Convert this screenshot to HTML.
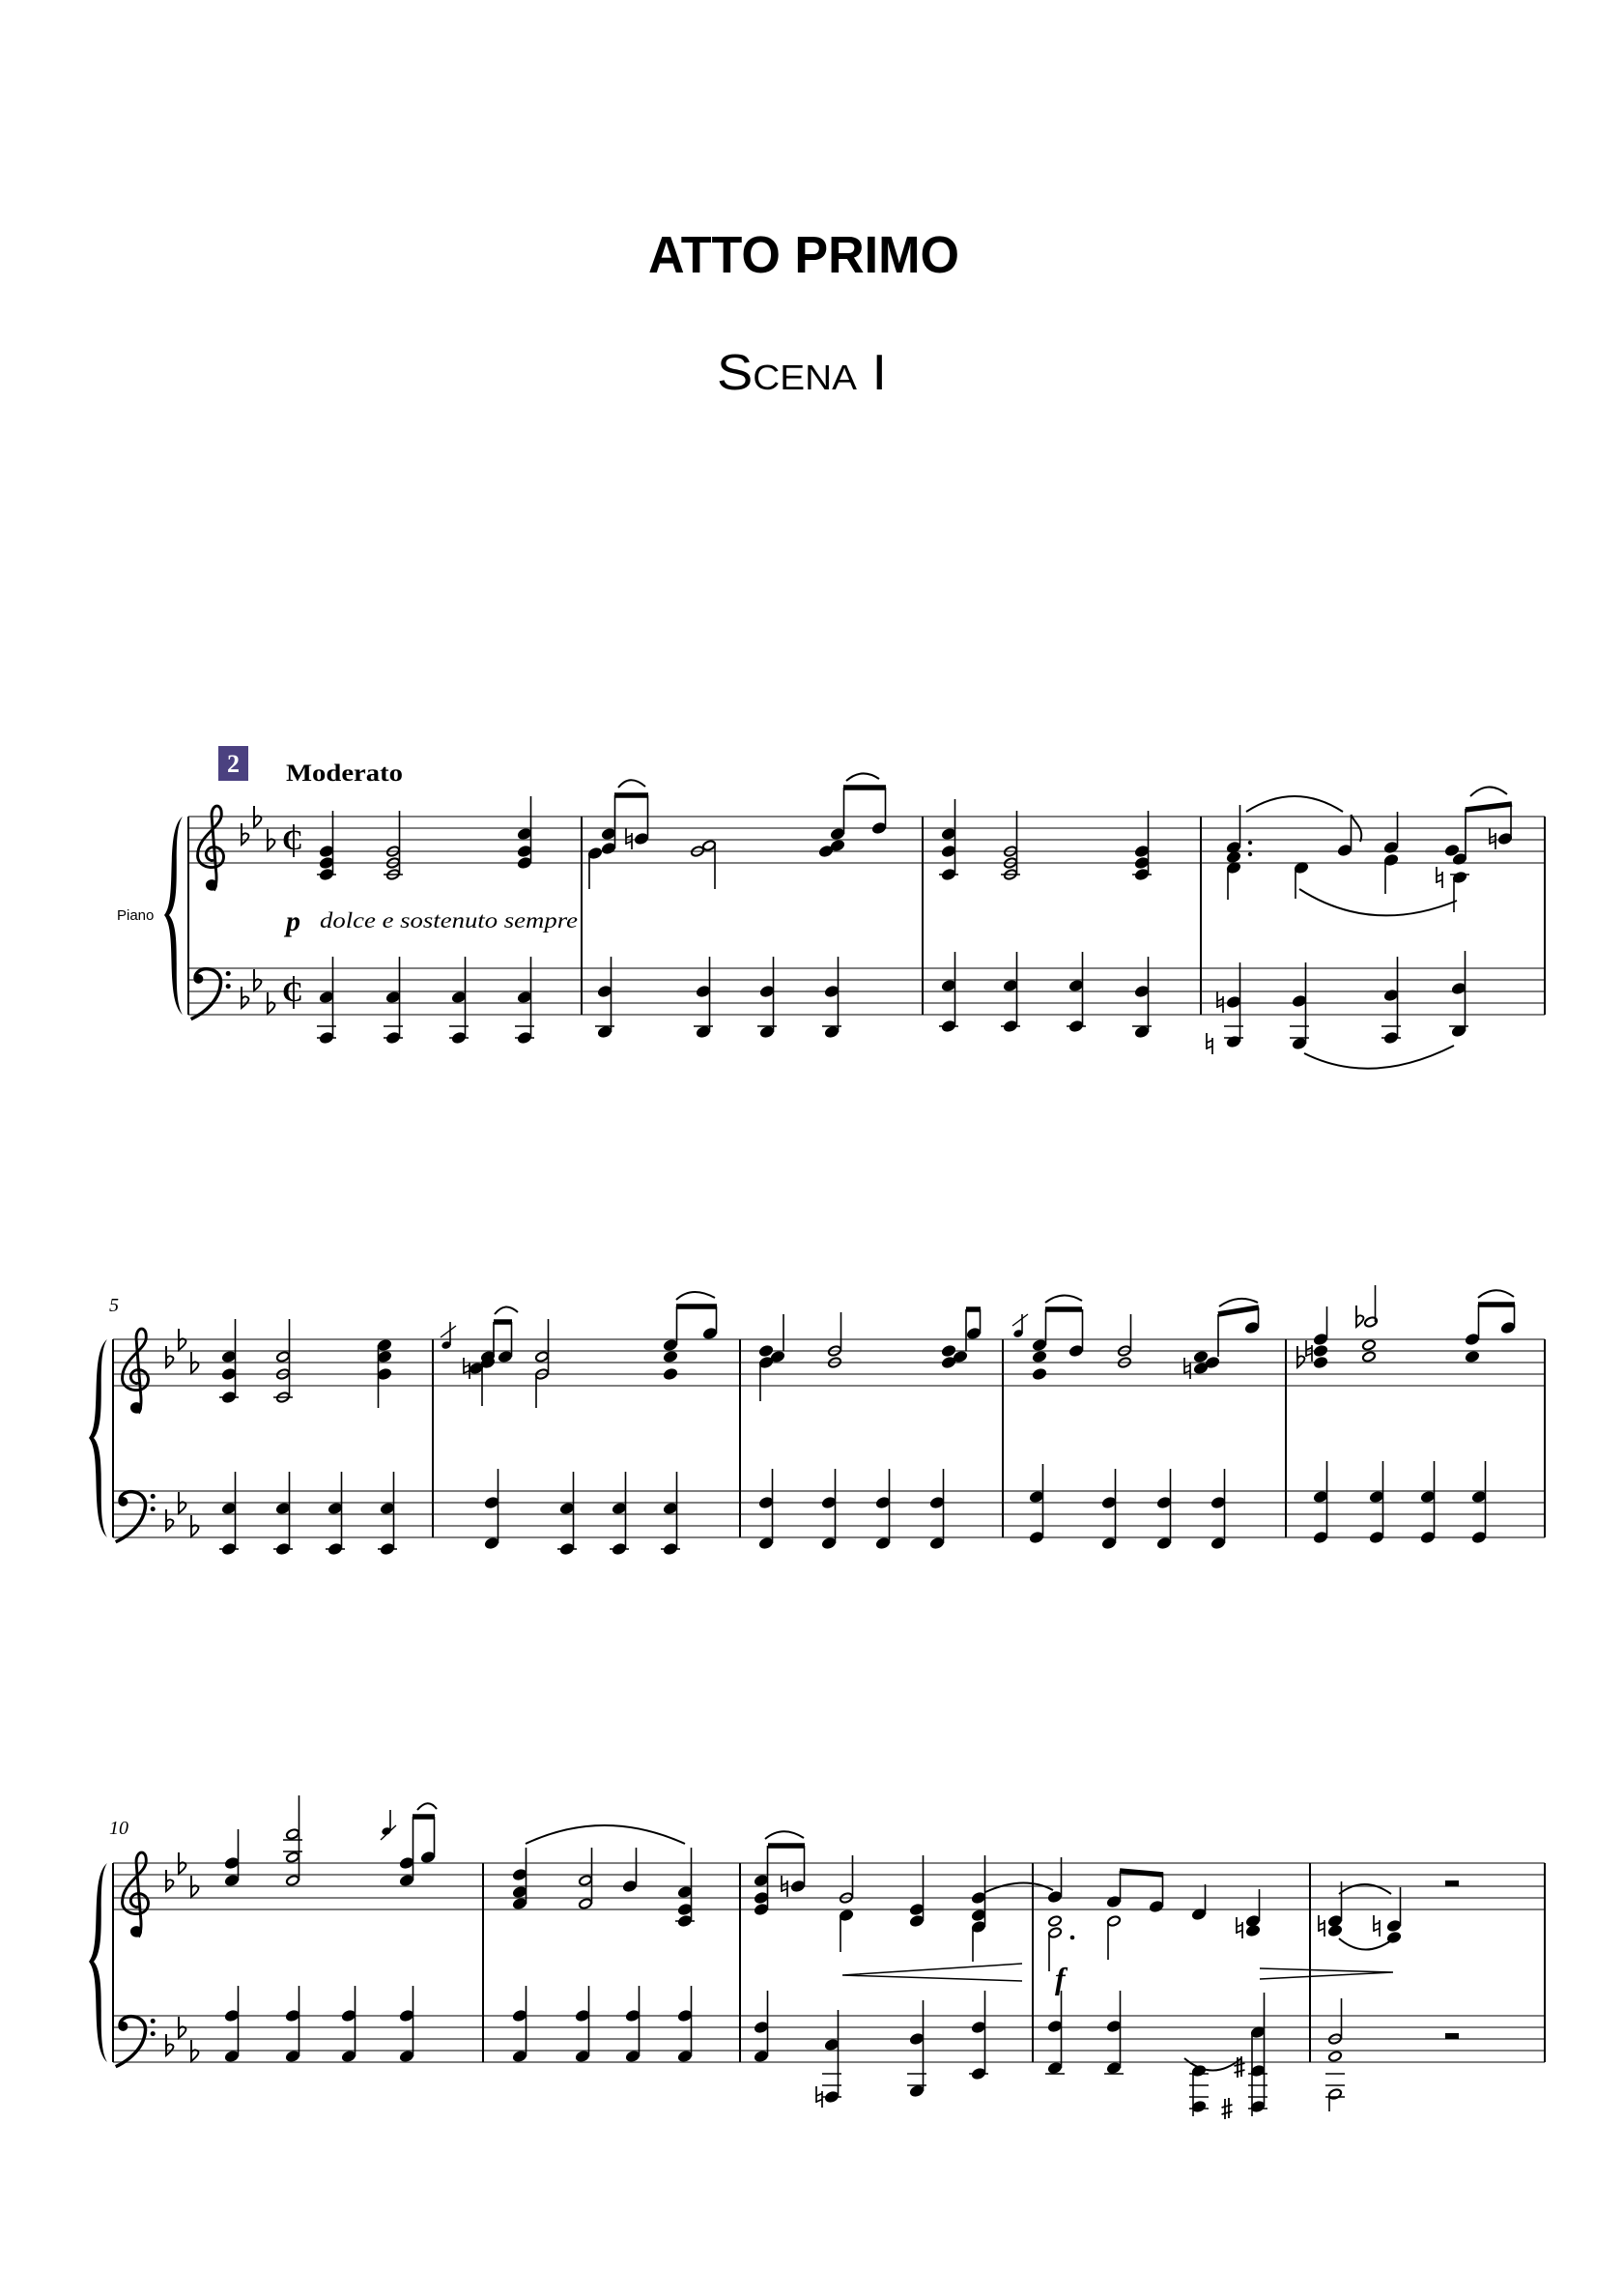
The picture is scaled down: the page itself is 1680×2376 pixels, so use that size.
<!DOCTYPE html>
<html><head><meta charset="utf-8"><style>
html,body{margin:0;padding:0;background:#fff;}
svg{display:block;}
</style></head><body>
<svg width="1680" height="2376" viewBox="0 0 1680 2376" xmlns="http://www.w3.org/2000/svg">
<defs>
<ellipse id="q" rx="7.3" ry="5.3" transform="rotate(-22)" fill="#000"/>
<ellipse id="h" rx="6.3" ry="4.2" transform="rotate(-22)" fill="none" stroke="#000" stroke-width="2.2"/>
<ellipse id="g" rx="4.8" ry="3.6" transform="rotate(-22)" fill="#000"/>
<path id="fl" d="M0 -17 V5 C5 1 10 -4 6 -6 C3 -8 0 -5 0 -3" fill="none" stroke="#000" stroke-width="1.9"/>
<path id="na" d="M-3 -11 V6 M3 -6 V11 M-3 -1 L3 -3.5 M-3 5 L3 2.5" fill="none" stroke="#000" stroke-width="1.7"/>
<path id="sh" d="M-2 -11 V10 M2 -12 V9 M-5.5 -2 L5.5 -5 M-5.5 5 L5.5 2" fill="none" stroke="#000" stroke-width="1.8"/>
<g id="tc" fill="none" stroke="#000" transform="scale(1.12)">
<path d="M3 36 C-5 38 -8 27 1 26 C7 26 8 34 3 36 Z" fill="#000" stroke="none"/>
<path d="M3 36 C5 34 6 26 5 18 L1 -32 C0 -44 11 -46 10 -33 C9 -22 -12 -14 -12 4 C-12 17 11 19 12 6 C13 -4 -1 -8 -4 1 C-5 6 0 10 3 8" stroke-width="2.6"/>
</g>
<g id="bc" transform="scale(1.1)">
<path d="M-9 -1 C-10 -14 16 -14 15 3 C14 19 0 31 -13 37" fill="none" stroke="#000" stroke-width="3.2"/>
<circle cx="-6" cy="-1" r="4.5" fill="#000"/>
<circle cx="22" cy="-6" r="2.3" fill="#000"/>
<circle cx="22" cy="6" r="2.3" fill="#000"/>
</g>
<g id="ct">
<text x="0" y="10" font-family="Liberation Serif, serif" font-weight="bold" font-size="30" text-anchor="middle">C</text>
<line x1="1" y1="-16" x2="1" y2="18" stroke="#000" stroke-width="1.8"/>
</g>
</defs>

<text x="832" y="282" text-anchor="middle" font-family="Liberation Sans, sans-serif" font-weight="bold" font-size="54" textLength="322" lengthAdjust="spacingAndGlyphs">ATTO PRIMO</text>
<text x="830" y="403" text-anchor="middle" font-family="Liberation Sans, sans-serif" font-size="52" font-variant="small-caps" textLength="176" lengthAdjust="spacingAndGlyphs">Scena I</text>

<rect x="226" y="772" width="31" height="36" fill="#4b4180"/>
<text x="241.5" y="799" text-anchor="middle" font-family="Liberation Serif, serif" font-weight="bold" font-size="26" fill="#fff">2</text>
<text x="296" y="808" font-family="Liberation Serif, serif" font-weight="bold" font-size="25" textLength="121" lengthAdjust="spacingAndGlyphs">Moderato</text>
<text x="121" y="952" font-family="Liberation Sans, sans-serif" font-size="15">Piano</text>
<text x="296" y="963" font-family="Liberation Serif, serif" font-weight="bold" font-style="italic" font-size="30">p</text>
<text x="331" y="960" font-family="Liberation Serif, serif" font-style="italic" font-size="23" textLength="267" lengthAdjust="spacingAndGlyphs">dolce e sostenuto sempre</text>
<text x="113" y="1357" font-family="Liberation Serif, serif" font-style="italic" font-size="20">5</text>
<text x="113" y="1898" font-family="Liberation Serif, serif" font-style="italic" font-size="20">10</text>
<text x="1092" y="2058" font-family="Liberation Serif, serif" font-weight="bold" font-style="italic" font-size="32">f</text>

<g stroke="#555" stroke-width="1.4">
<path d="M195 845H1599M195 857H1599M195 869H1599M195 881H1599M195 893H1599M195 1002H1599M195 1014H1599M195 1026H1599M195 1038H1599M195 1050H1599"/>
<path d="M117 1386H1599M117 1398H1599M117 1410H1599M117 1422H1599M117 1434H1599M117 1543H1599M117 1555H1599M117 1567H1599M117 1579H1599M117 1591H1599"/>
<path d="M117 1928H1599M117 1940H1599M117 1952H1599M117 1964H1599M117 1976H1599M117 2086H1599M117 2098H1599M117 2110H1599M117 2122H1599M117 2134H1599"/>
</g>
<g stroke="#000" stroke-width="2">
<path d="M195 845V1050M602 845V1050M955 845V1050M1243 845V1050M1599 845V1050"/>
<path d="M117 1386V1591M448 1386V1591M766 1386V1591M1038 1386V1591M1331 1386V1591M1599 1386V1591"/>
<path d="M117 1928V2134M500 1928V2134M766 1928V2134M1069 1928V2134M1356 1928V2134M1599 1928V2134"/>
</g>
<g fill="#000">
<path d="M189 845 C170 860 184 930 170 947 C184 964 170 1034 189 1050 C176 1030 190 964 175 947 C190 930 176 864 189 845Z"/>
<path d="M111 1386 C92 1401 106 1471 92 1488 C106 1505 92 1575 111 1591 C98 1571 112 1505 97 1488 C112 1471 98 1405 111 1386Z"/>
<path d="M111 1928 C92 1943 106 2013 92 2030 C106 2047 92 2117 111 2134 C98 2113 112 2047 97 2030 C112 2013 98 1947 111 1928Z"/>
</g>
<use href="#tc" x="218" y="881"/><use href="#bc" x="212" y="1014"/>
<use href="#tc" x="140" y="1422"/><use href="#bc" x="134" y="1555"/>
<use href="#tc" x="140" y="1964"/><use href="#bc" x="134" y="2098"/>
<g>
<use href="#fl" x="250" y="869"/><use href="#fl" x="263" y="851"/><use href="#fl" x="277" y="875"/>
<use href="#fl" x="250" y="1038"/><use href="#fl" x="263" y="1020"/><use href="#fl" x="277" y="1044"/>
<use href="#fl" x="172" y="1410"/><use href="#fl" x="185" y="1392"/><use href="#fl" x="198" y="1416"/>
<use href="#fl" x="172" y="1579"/><use href="#fl" x="185" y="1561"/><use href="#fl" x="198" y="1585"/>
<use href="#fl" x="172" y="1952"/><use href="#fl" x="185" y="1934"/><use href="#fl" x="198" y="1958"/>
<use href="#fl" x="172" y="2122"/><use href="#fl" x="185" y="2104"/><use href="#fl" x="198" y="2128"/>
</g>
<use href="#ct" x="303" y="869"/><use href="#ct" x="303" y="1026"/>

<g>
<use href="#q" x="338" y="881"/><use href="#q" x="338" y="893"/><use href="#q" x="338" y="905"/>
<use href="#h" x="407" y="881"/><use href="#h" x="407" y="893"/><use href="#h" x="407" y="905"/>
<use href="#q" x="543" y="863"/><use href="#q" x="543" y="881"/><use href="#q" x="543" y="893"/>
<use href="#q" x="338" y="1032"/><use href="#q" x="338" y="1074"/>
<use href="#q" x="407" y="1032"/><use href="#q" x="407" y="1074"/>
<use href="#q" x="475" y="1032"/><use href="#q" x="475" y="1074"/>
<use href="#q" x="543" y="1032"/><use href="#q" x="543" y="1074"/>
<use href="#q" x="616" y="883"/><use href="#q" x="630" y="878"/><use href="#q" x="630" y="863"/>
<use href="#na" x="651" y="868"/><use href="#q" x="664" y="868"/>
<use href="#h" x="722" y="881"/><use href="#h" x="734" y="875"/>
<use href="#q" x="855" y="881"/><use href="#q" x="867" y="875"/><use href="#q" x="867" y="863"/>
<use href="#q" x="910" y="857"/>
<use href="#q" x="626" y="1026"/><use href="#q" x="626" y="1068"/>
<use href="#q" x="728" y="1026"/><use href="#q" x="728" y="1068"/>
<use href="#q" x="794" y="1026"/><use href="#q" x="794" y="1068"/>
<use href="#q" x="861" y="1026"/><use href="#q" x="861" y="1068"/>
<use href="#q" x="982" y="863"/><use href="#q" x="982" y="881"/><use href="#q" x="982" y="905"/>
<use href="#h" x="1046" y="881"/><use href="#h" x="1046" y="893"/><use href="#h" x="1046" y="905"/>
<use href="#q" x="1182" y="881"/><use href="#q" x="1182" y="893"/><use href="#q" x="1182" y="905"/>
<use href="#q" x="982" y="1020"/><use href="#q" x="982" y="1062"/>
<use href="#q" x="1046" y="1020"/><use href="#q" x="1046" y="1062"/>
<use href="#q" x="1114" y="1020"/><use href="#q" x="1114" y="1062"/>
<use href="#q" x="1182" y="1026"/><use href="#q" x="1182" y="1068"/>
<use href="#q" x="1277" y="877"/><use href="#q" x="1277" y="887"/><use href="#q" x="1277" y="898"/>
<circle cx="1294" cy="872" r="2.2"/><circle cx="1294" cy="884" r="2.2"/>
<use href="#q" x="1347" y="898"/><use href="#q" x="1392" y="880"/>
<use href="#q" x="1440" y="877"/><use href="#q" x="1440" y="890"/>
<use href="#q" x="1503" y="880"/><use href="#q" x="1511" y="889"/><use href="#q" x="1511" y="908"/>
<use href="#na" x="1490" y="908"/><use href="#na" x="1545" y="868"/><use href="#q" x="1558" y="868"/>
<use href="#q" x="1277" y="1037"/><use href="#q" x="1277" y="1078"/>
<use href="#na" x="1263" y="1037"/><use href="#na" x="1252" y="1080"/>
<use href="#q" x="1345" y="1036"/><use href="#q" x="1345" y="1080"/>
<use href="#q" x="1440" y="1030"/><use href="#q" x="1440" y="1074"/>
<use href="#q" x="1510" y="1023"/><use href="#q" x="1510" y="1067"/>
</g>
<g stroke="#000" stroke-width="1.6" fill="none">
<path d="M344.5 905V839M413.5 905V839M549.5 893V824
M344.5 1074V990M413.5 1074V990M481.5 1074V990M549.5 1074V990
M636.5 878V823M670.5 868V823M610 883V920M740 875V920M873.5 863V815M916.5 857V815
M632.5 1068V990M734.5 1068V990M800.5 1068V990M867.5 1068V990
M988.5 905V827M1052.5 905V839M1188.5 905V839
M988.5 1062V985M1052.5 1062V985M1120.5 1062V985M1188.5 1068V990
M1283.5 877V833M1271 898V931M1341 898V930M1398.5 880V843M1446.5 877V840M1434 890V925M1517 889V837M1505 908V944M1564 868V832
M1283.5 1078V996M1351.5 1080V996M1446.5 1074V990M1516.5 1067V984"/>
<path d="M328 905H348M397 905H417M328 1062H348M328 1074H348M397 1062H417M397 1074H417M465 1062H485M465 1074H485M533 1062H553M533 1074H553
M616 1062H636M718 1062H738M784 1062H804M851 1062H871M972 1062H992M1036 1062H1056M1104 1062H1124M1172 1062H1192M972 905H992M1036 905H1056M1172 905H1192
M1267 1062H1287M1267 1074H1287M1335 1062H1355M1335 1074H1355M1430 1062H1450M1430 1074H1450M1500 1062H1520M1501 905H1521"/>
<path d="M1398.5 843C1402 852 1413 857 1408 871" stroke-width="2"/>
<path d="M1290 840Q1340 808 1390 840M1345 920Q1420 968 1508 932M1522 824Q1540 806 1560 822M1350 1090Q1420 1125 1505 1082M640 815Q652 800 668 814M876 808Q892 794 910 806" stroke-width="2"/>
<path d="M636 823L671 823M873 815L917 815M1517 838L1565 832" stroke-width="5.5"/>
</g>

<g>
<use href="#q" x="237" y="1404"/><use href="#q" x="237" y="1422"/><use href="#q" x="237" y="1446"/>
<use href="#h" x="293" y="1404"/><use href="#h" x="293" y="1422"/><use href="#h" x="293" y="1446"/>
<use href="#q" x="398" y="1392"/><use href="#q" x="398" y="1404"/><use href="#q" x="398" y="1422"/>
<use href="#q" x="237" y="1561"/><use href="#q" x="237" y="1603"/>
<use href="#q" x="293" y="1561"/><use href="#q" x="293" y="1603"/>
<use href="#q" x="347" y="1561"/><use href="#q" x="347" y="1603"/>
<use href="#q" x="401" y="1561"/><use href="#q" x="401" y="1603"/>
<use href="#g" x="462" y="1392"/>
<use href="#na" x="483" y="1416"/><use href="#q" x="493" y="1416"/><use href="#q" x="505" y="1410"/><use href="#q" x="505" y="1404"/>
<use href="#q" x="523" y="1404"/>
<use href="#h" x="561" y="1404"/><use href="#h" x="561" y="1422"/>
<use href="#q" x="694" y="1392"/><use href="#q" x="694" y="1404"/><use href="#q" x="694" y="1422"/>
<use href="#q" x="735" y="1380"/>
<use href="#q" x="509" y="1555"/><use href="#q" x="509" y="1597"/>
<use href="#q" x="587" y="1561"/><use href="#q" x="587" y="1603"/>
<use href="#q" x="641" y="1561"/><use href="#q" x="641" y="1603"/>
<use href="#q" x="694" y="1561"/><use href="#q" x="694" y="1603"/>
<use href="#q" x="793" y="1398"/><use href="#q" x="793" y="1410"/><use href="#q" x="805" y="1404"/>
<use href="#h" x="864" y="1398"/><use href="#h" x="864" y="1410"/>
<use href="#q" x="982" y="1398"/><use href="#q" x="982" y="1410"/><use href="#q" x="994" y="1404"/>
<use href="#q" x="1008" y="1380"/>
<use href="#q" x="793" y="1555"/><use href="#q" x="793" y="1597"/>
<use href="#q" x="858" y="1555"/><use href="#q" x="858" y="1597"/>
<use href="#q" x="914" y="1555"/><use href="#q" x="914" y="1597"/>
<use href="#q" x="970" y="1555"/><use href="#q" x="970" y="1597"/>
<use href="#g" x="1054" y="1380"/>
<use href="#q" x="1076" y="1392"/><use href="#q" x="1076" y="1404"/><use href="#q" x="1076" y="1422"/>
<use href="#q" x="1114" y="1398"/>
<use href="#h" x="1164" y="1398"/><use href="#h" x="1164" y="1410"/>
<use href="#na" x="1229" y="1416"/><use href="#q" x="1243" y="1404"/><use href="#q" x="1243" y="1416"/><use href="#q" x="1255" y="1410"/>
<use href="#q" x="1296" y="1374"/>
<use href="#q" x="1073" y="1549"/><use href="#q" x="1073" y="1591"/>
<use href="#q" x="1148" y="1555"/><use href="#q" x="1148" y="1597"/>
<use href="#q" x="1205" y="1555"/><use href="#q" x="1205" y="1597"/>
<use href="#q" x="1261" y="1555"/><use href="#q" x="1261" y="1597"/>
<use href="#fl" x="1343" y="1410"/><use href="#na" x="1355" y="1398"/>
<use href="#q" x="1367" y="1386"/><use href="#q" x="1367" y="1398"/><use href="#q" x="1367" y="1410"/>
<use href="#h" x="1417" y="1392"/><use href="#h" x="1417" y="1404"/><use href="#fl" x="1404" y="1368"/><use href="#h" x="1419" y="1368"/>
<use href="#q" x="1524" y="1386"/><use href="#q" x="1524" y="1404"/>
<use href="#q" x="1561" y="1374"/>
<use href="#q" x="1367" y="1549"/><use href="#q" x="1367" y="1591"/>
<use href="#q" x="1425" y="1549"/><use href="#q" x="1425" y="1591"/>
<use href="#q" x="1478" y="1549"/><use href="#q" x="1478" y="1591"/>
<use href="#q" x="1531" y="1549"/><use href="#q" x="1531" y="1591"/>
</g>
<g stroke="#000" stroke-width="1.6" fill="none">
<path d="M243.5 1446V1365M299.5 1446V1365M391.5 1392V1457
M243.5 1603V1523M299.5 1603V1523M353.5 1603V1523M407.5 1603V1523
M466 1392V1368M511 1404V1368M529.5 1404V1368M499 1416V1455M567.5 1422V1365M555 1422V1457M700.5 1392V1352M741.5 1380V1352
M515.5 1597V1520M593.5 1603V1523M647.5 1603V1523M700.5 1603V1523
M811 1398V1360M787 1410V1450M870.5 1398V1358M1000 1398V1355M1014.5 1380V1355
M799.5 1597V1520M864.5 1597V1520M920.5 1597V1520M976.5 1597V1520
M1058 1380V1360M1082.5 1392V1355M1120.5 1398V1355M1170.5 1398V1360M1261 1404V1360M1302.5 1374V1353
M1079.5 1591V1515M1154.5 1597V1520M1211.5 1597V1520M1267.5 1597V1520
M1373.5 1386V1352M1423.5 1368V1330M1530.5 1386V1350M1567.5 1374V1350
M1373.5 1591V1512M1431.5 1591V1512M1484.5 1591V1512M1537.5 1591V1512"/>
<path d="M227 1446H247M283 1446H303M227 1603H247M283 1603H303M337 1603H357M391 1603H411M577 1603H597M631 1603H651M684 1603H704"/>
<path d="M456 1384L472 1372M1048 1372L1064 1360" stroke-width="1.4"/>
<path d="M512 1360Q523 1346 536 1358M700 1345Q716 1330 740 1343M1082 1348Q1100 1334 1120 1346M1262 1352Q1282 1338 1302 1348M1530 1343Q1548 1328 1567 1342" stroke-width="2"/>
<path d="M511 1368L530 1368M700 1352L742 1352M1000 1355L1015 1355M1120 1355L1082 1355M1261 1360L1303 1353M1530 1350L1568 1350" stroke-width="5.5"/>
</g>

<g>
<use href="#q" x="240" y="1928"/><use href="#q" x="240" y="1946"/>
<use href="#h" x="303" y="1898"/><use href="#h" x="303" y="1922"/><use href="#h" x="303" y="1946"/>
<use href="#g" x="400" y="1895"/>
<use href="#q" x="421" y="1928"/><use href="#q" x="421" y="1946"/><use href="#q" x="443" y="1922"/>
<use href="#q" x="240" y="2086"/><use href="#q" x="240" y="2128"/>
<use href="#q" x="303" y="2086"/><use href="#q" x="303" y="2128"/>
<use href="#q" x="361" y="2086"/><use href="#q" x="361" y="2128"/>
<use href="#q" x="421" y="2086"/><use href="#q" x="421" y="2128"/>
<use href="#q" x="538" y="1940"/><use href="#q" x="538" y="1958"/><use href="#q" x="538" y="1970"/>
<use href="#h" x="606" y="1946"/><use href="#h" x="606" y="1970"/>
<use href="#q" x="652" y="1952"/>
<use href="#q" x="709" y="1958"/><use href="#q" x="709" y="1976"/><use href="#q" x="709" y="1988"/>
<use href="#q" x="538" y="2086"/><use href="#q" x="538" y="2128"/>
<use href="#q" x="603" y="2086"/><use href="#q" x="603" y="2128"/>
<use href="#q" x="655" y="2086"/><use href="#q" x="655" y="2128"/>
<use href="#q" x="709" y="2086"/><use href="#q" x="709" y="2128"/>
<use href="#q" x="788" y="1946"/><use href="#q" x="788" y="1964"/><use href="#q" x="788" y="1976"/>
<use href="#na" x="812" y="1952"/><use href="#q" x="826" y="1952"/>
<use href="#h" x="876" y="1964"/><use href="#q" x="876" y="1982"/>
<use href="#q" x="949" y="1988"/><use href="#q" x="949" y="1976"/>
<use href="#q" x="1013" y="1964"/><use href="#q" x="1013" y="1982"/><use href="#q" x="1013" y="1994"/>
<use href="#q" x="788" y="2098"/><use href="#q" x="788" y="2128"/>
<use href="#na" x="848" y="2170"/><use href="#q" x="861" y="2116"/><use href="#q" x="861" y="2170"/>
<use href="#q" x="949" y="2110"/><use href="#q" x="949" y="2164"/>
<use href="#q" x="1013" y="2098"/><use href="#q" x="1013" y="2146"/>
<use href="#q" x="1092" y="1963"/><use href="#h" x="1092" y="1988"/><use href="#h" x="1092" y="2000"/>
<circle cx="1110" cy="2005" r="2.3"/>
<use href="#q" x="1153" y="1968"/><use href="#h" x="1153" y="1988"/>
<use href="#q" x="1197" y="1973"/><use href="#q" x="1241" y="1981"/>
<use href="#na" x="1283" y="1995"/><use href="#q" x="1297" y="1988"/><use href="#q" x="1297" y="1998"/>
<use href="#q" x="1092" y="2097"/><use href="#q" x="1092" y="2140"/>
<use href="#q" x="1153" y="2097"/><use href="#q" x="1153" y="2140"/>
<use href="#q" x="1241" y="2143"/><use href="#q" x="1241" y="2180"/>
<use href="#sh" x="1283" y="2140"/><use href="#sh" x="1270" y="2183"/>
<use href="#q" x="1302" y="2103"/><use href="#q" x="1302" y="2143"/><use href="#q" x="1302" y="2180"/>
<use href="#na" x="1368" y="1993"/><use href="#q" x="1382" y="1988"/><use href="#q" x="1382" y="1998"/>
<use href="#na" x="1425" y="1993"/><use href="#q" x="1443" y="1993"/><use href="#q" x="1443" y="2005"/>
<rect x="1496" y="1946" width="14" height="6"/>
<rect x="1496" y="2104" width="14" height="6"/>
<use href="#h" x="1382" y="2110"/><use href="#h" x="1382" y="2128"/><use href="#h" x="1382" y="2167"/>
</g>
<g stroke="#000" stroke-width="1.6" fill="none">
<path d="M246.5 1946V1893M309.5 1946V1858M404 1895V1873M427.5 1946V1880M449.5 1922V1880
M246.5 2128V2055M309.5 2128V2055M367.5 2128V2055M427.5 2128V2055
M544.5 1970V1912M612.5 1970V1912M658.5 1952V1912M715.5 1988V1912
M544.5 2128V2055M609.5 2128V2055M661.5 2128V2055M715.5 2128V2055
M794.5 1976V1910M832.5 1952V1910M882.5 1964V1920M870 1982V2020M955.5 1988V1920M1019.5 1994V1920M1007 1994V2030
M794.5 2128V2060M867.5 2170V2080M955.5 2164V2070M1019.5 2146V2060
M1098.5 1963V1922M1086 2000V2040M1159.5 1968V1936M1147 1988V2028M1203.5 1973V1938M1247.5 1981V1950M1303.5 1988V1955
M1098.5 2140V2060M1159.5 2140V2060M1235 2143V2190M1296 2103V2190M1308.5 2180V2062
M1388.5 1988V1947M1449.5 1993V1953M1388.5 2110V2068M1376 2167V2185"/>
<path d="M293 1904H313M293 1916H313
M699 1988H719M851 2146H871M851 2158H871M851 2170H871M939 2146H959M939 2158H959M1003 2146H1023
M1082 2146H1102M1143 2146H1163M1231 2146H1251M1231 2158H1251M1231 2170H1251M1231 2182H1251M1292 2146H1312M1292 2158H1312M1292 2170H1312M1292 2182H1312
M1372 2146H1392M1372 2158H1392M1372 2170H1392"/>
<path d="M394 1904L410 1889" stroke-width="1.4"/>
<path d="M544 1908Q625 1870 709 1908M432 1873Q443 1860 452 1872M792 1903Q810 1888 832 1902M1020 1958Q1060 1940 1090 1956M1386 1960Q1412 1940 1440 1960M1386 2006Q1412 2028 1440 2008M1226 2130Q1255 2155 1285 2130" stroke-width="2"/>
<path d="M427 1880L450 1880M795 1910L833 1910M1159 1936L1204 1940" stroke-width="5.5"/>
<path d="M872 2044L1058 2032M872 2044L1058 2050M1304 2037L1442 2041M1304 2048L1442 2041" stroke-width="1.5"/>
</g>
</svg>
</body></html>
